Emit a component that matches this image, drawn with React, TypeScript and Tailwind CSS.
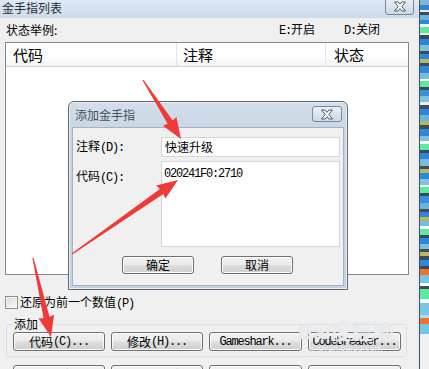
import React from 'react';

const M: React.FC<{ children: React.ReactNode }> = ({ children }) => (
  <span className="font-['Liberation_Mono',monospace] tracking-[-1.2px]">{children}</span>
);

const CloseX: React.FC = () => (
  <svg width="14" height="11" viewBox="0 0 14 11">
    <path
      d="M1.5 1 H5 L7 3.3 L9 1 H12.5 L8.8 5.5 L12.5 10 H9 L7 7.7 L5 10 H1.5 L5.2 5.5 Z"
      fill="#ffffff"
      stroke="#4b5667"
      strokeWidth="1"
      strokeLinejoin="round"
    />
  </svg>
);

const WinButton: React.FC<{ w: string; children: React.ReactNode }> = ({ w, children }) => (
  <div
    className={`${w} h-full shrink-0 flex items-center justify-center rounded-[3px] border border-[#707070] bg-[linear-gradient(#f2f2f2,#ebebeb_48%,#dddddd_52%,#cfcfcf)] shadow-[inset_0_0_0_1px_#fbfbfb] text-[12px] leading-[14px] text-black`}
  >
    {children}
  </div>
);

// colour bands of the window peeking out at the right edge
const bands: [number, string][] = [
  [5, '#80b8d0'], [5, '#2f86d6'], [2, '#e6eef2'], [3, '#3c4a5a'], [5, '#6ab4dc'], [4, '#2e88d8'],
  [3, '#f4f8f8'], [6, '#5ee8a0'], [2, '#e0f0e8'], [4, '#3a4858'], [6, '#2f86d6'], [6, '#7cc0dc'],
  [3, '#3c4a5a'], [5, '#2f86d6'], [4, '#b4bc62'], [3, '#404c5c'], [7, '#2e88d8'], [6, '#78bcd8'],
  [2, '#ffffff'], [6, '#5ee8a0'], [3, '#3a4858'], [6, '#3a90d8'], [6, '#80c4dc'], [3, '#e8eef0'],
  [4, '#404c5c'], [6, '#2f86d6'], [6, '#6ab4dc'], [4, '#b0b860'], [4, '#3c4a5a'], [7, '#2e88d8'],
  [5, '#7cc0dc'], [3, '#ffffff'], [6, '#5ee8a0'], [3, '#3a4858'], [6, '#2f86d6'], [7, '#78bcd8'],
  [3, '#404c5c'], [4, '#b4bc62'], [6, '#2e88d8'], [6, '#80c4dc'], [2, '#f0f4f4'], [6, '#5ee8a0'],
  [3, '#3a4858'], [7, '#3a90d8'], [6, '#6ab4dc'], [3, '#404c5c'], [5, '#2f86d6'], [4, '#b0b860'],
  [5, '#78bcd8'], [3, '#ffffff'], [6, '#5ee8a0'], [3, '#3a4858'], [6, '#2f86d6'], [5, '#7cc0dc'],
  [3, '#404c5c'], [4, '#b4bc62'], [4, '#3c4a5a'], [6, '#2e88d8'], [3, '#3a4858'], [6, '#f07030'],
  [8, '#72c8e0'], [3, '#ffffff'], [3, '#404c5c'], [10, '#5ee8a0'], [4, '#f4f8f8'], [12, '#78c8e4'],
  [3, '#a8e0f0'], [6, '#f07030'], [10, '#72c8e0'],
];

function arrowPoints(tx: number, ty: number, hx: number, hy: number): string {
  const dx = hx - tx;
  const dy = hy - ty;
  const len = Math.hypot(dx, dy);
  const ux = dx / len;
  const uy = dy / len;
  const nx = -uy;
  const ny = ux;
  const headLen = 20;
  const headW = 8;
  const shaftW = 3;
  const tailW = 0.6;
  const bx = hx - ux * headLen;
  const by = hy - uy * headLen;
  const p = (x: number, y: number) => `${x.toFixed(1)},${y.toFixed(1)}`;
  return [
    p(tx + nx * tailW, ty + ny * tailW),
    p(bx + nx * shaftW, by + ny * shaftW),
    p(bx + nx * headW - ux * 1, by + ny * headW - uy * 1),
    p(hx, hy),
    p(bx - nx * headW - ux * 1, by - ny * headW - uy * 1),
    p(bx - nx * shaftW, by - ny * shaftW),
    p(tx - nx * tailW, ty - ny * tailW),
  ].join(' ');
}

const App: React.FC = () => {
  return (
    <div className="relative w-[429px] h-[369px] overflow-hidden flex bg-[#f0f0f0] text-black font-['Noto_Sans_CJK_SC',sans-serif] text-[12px] leading-[14px]">
      {/* main window */}
      <div className="w-[420px] shrink-0 flex flex-col border-r border-[#4a5260]">
        {/* title bar */}
        <div className="h-[18px] shrink-0 flex items-start justify-between pl-[2px] pr-[5px] bg-[linear-gradient(#dfe8f3,#cedaea)]">
          <span className="mt-[1px] text-[12px] leading-[14px] text-[#26303c]">金手指列表</span>
          <div className="-mt-[2px] w-[29px] h-[17px] flex items-center justify-center rounded-b-[3px] border border-[#7a889b] bg-[linear-gradient(#e9eff6,#ccd8e6)]">
            <CloseX />
          </div>
        </div>

        {/* body */}
        <div className="flex-1 flex flex-col px-[5px] border-r-[2px] border-[#e4ebf2]">
          <div className="mt-[5px] h-[14px] flex items-center">
            <span className="w-[274px] shrink-0 pl-[1px]">状态举例:</span>
            <span className="w-[65px] shrink-0"><M>E:</M>开启</span>
            <span><M>D:</M>关闭</span>
          </div>

          {/* list view */}
          <div className="mt-[5px] w-[404px] h-[233px] shrink-0 border border-[#828790] bg-white flex flex-col">
            <div className="h-[24px] flex border-b border-[#d5d5d5] bg-[linear-gradient(#ffffff,#ffffff_45%,#f3f4f6)] text-[15px] leading-[18px]">
              <div className="w-[170px] shrink-0 flex items-center pl-[7px]">代码</div>
              <div className="w-[149px] shrink-0 flex items-center pl-[6px] border-l border-[#e1e4e8]">注释</div>
              <div className="flex-1 flex items-center pl-[8px] border-l border-[#e1e4e8]">状态</div>
            </div>
          </div>

          {/* checkbox */}
          <div className="mt-[21px] h-[13px] flex items-center gap-[2px]">
            <div className="w-[13px] h-[13px] shrink-0 border border-[#8e8f8f] bg-[linear-gradient(135deg,#dcdcdc,#f8f8f8)] shadow-[inset_0_0_0_1px_#f4f4f4]" />
            <span>还原为前一个数值<M>(P)</M></span>
          </div>

          {/* group box */}
          <div className="relative mt-[15px] ml-[1px] w-[401px] rounded-[3px] border border-[#d5dfe5] pt-[7px] px-[6px] pb-[5px]">
            <span className="absolute left-[6px] -top-[8px] px-[1px] bg-[#f0f0f0] leading-[14px]">添加</span>
            <div className="h-[19px] flex gap-[6px]">
              <WinButton w="w-[92px]">代码<M>(C)...</M></WinButton>
              <WinButton w="w-[92px]">修改<M>(H)...</M></WinButton>
              <WinButton w="w-[93px]"><M>Gameshark...</M></WinButton>
              <WinButton w="w-[93px]"><M>CodeBreaker...</M></WinButton>
            </div>
          </div>

          <div className="mt-[8px] ml-[8px] h-[19px] flex gap-[6px]">
            <WinButton w="w-[92px]">删除</WinButton>
            <WinButton w="w-[92px]">全部删除</WinButton>
            <WinButton w="w-[93px]">导入</WinButton>
            <WinButton w="w-[93px]">导出</WinButton>
          </div>
        </div>
      </div>

      {/* window edge on the right */}
      <div className="flex-1 flex flex-col">
        {bands.map(([h, c], i) => (
          <div key={i} className="shrink-0 w-full" style={{ height: h, backgroundColor: c }} />
        ))}
      </div>

      {/* dialog */}
      <div className="absolute left-[68px] top-[101px] w-[280px] h-[189px] flex flex-col rounded-t-[6px] border border-[#5f6773] bg-[linear-gradient(#d3deea,#c5d3e3_20%,#c3d2e2)] shadow-[inset_0_0_0_1px_#e8eef5]">
        <div className="h-[25px] shrink-0 flex items-start justify-between pl-[6px] pr-[5px]">
          <span className="mt-[6px] text-[#47515d]">添加金手指</span>
          <div className="mt-[4px] w-[30px] h-[16px] flex items-center justify-center rounded-[3px] border border-[#7a889b] bg-[linear-gradient(#e9eff6,#ccd8e6)]">
            <CloseX />
          </div>
        </div>
        <div className="mx-[3px] mb-[3px] flex-1 flex flex-col border border-[#a6b3c2] bg-[#f0f0f0] pt-[9px]">
          <div className="flex items-center h-[20px]">
            <span className="w-[88px] shrink-0 pl-[3px]">注释<M>(D):</M></span>
            <div className="w-[179px] h-[20px] flex items-center pl-[3px] border border-[#d3d7dc] bg-white">快速升级</div>
          </div>
          <div className="mt-[4px] flex items-start">
            <span className="w-[88px] shrink-0 pl-[3px] pt-[8px]">代码<M>(C):</M></span>
            <div className="w-[179px] h-[86px] pl-[2px] pt-[3px] border border-[#d3d7dc] bg-white">
              <M>020241F0:2710</M>
            </div>
          </div>
          <div className="mt-[9px] h-[18px] flex gap-[27px] pl-[49px]">
            <WinButton w="w-[72px]">确定</WinButton>
            <WinButton w="w-[72px]">取消</WinButton>
          </div>
        </div>
      </div>

      {/* watermark */}
      <div className="absolute left-[298px] top-[319px] flex flex-col items-center text-white/60 [text-shadow:0_0_1px_#c8ced6] pointer-events-none">
        <span className="text-[21px] leading-[22px] font-bold font-['Liberation_Sans',sans-serif]">Bai<span className="font-['Noto_Sans_CJK_SC',sans-serif]">度经验</span></span>
        <span className="text-[9px] leading-[10px] font-['Liberation_Sans',sans-serif]">jingyan.baidu.com</span>
      </div>

      {/* red arrows */}
      <svg className="absolute left-0 top-0 pointer-events-none" width="429" height="369" viewBox="0 0 429 369">
        <polygon points={arrowPoints(143, 80, 181, 139)} fill="#f03a3a" />
        <polygon points={arrowPoints(72, 254, 178, 180)} fill="#f03a3a" />
        <polygon points={arrowPoints(33, 258, 51, 337)} fill="#f03a3a" />
      </svg>
    </div>
  );
};

export default App;
